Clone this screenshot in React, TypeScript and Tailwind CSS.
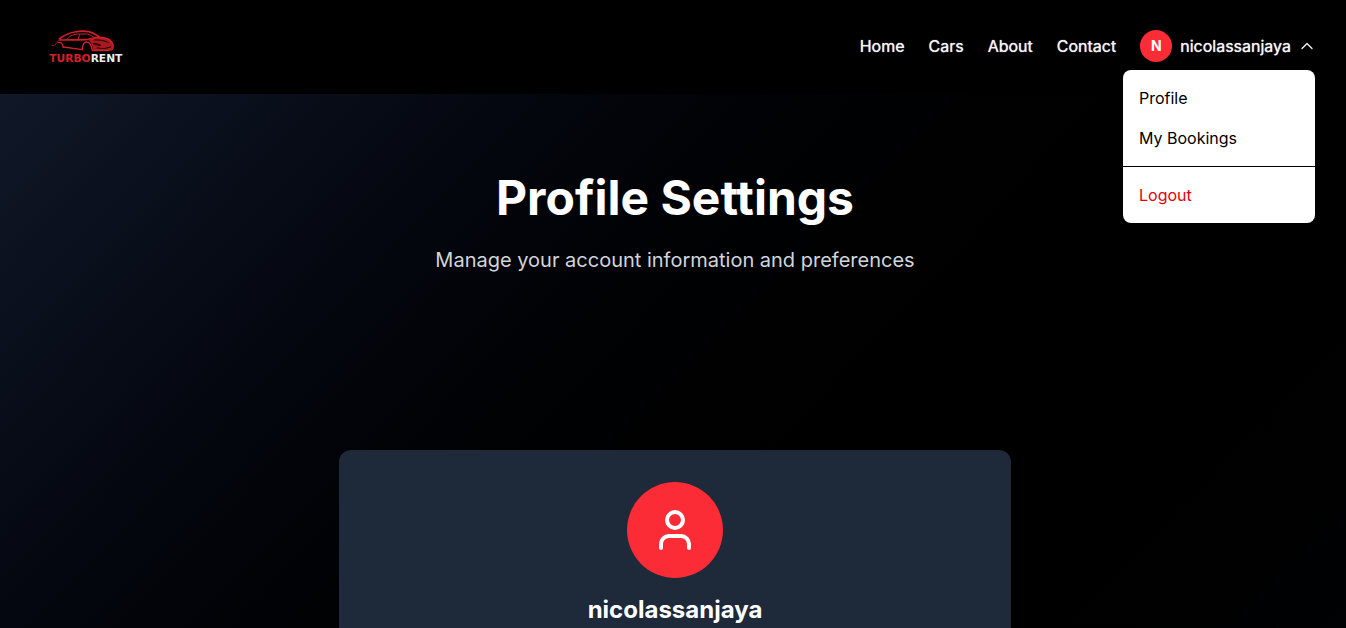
import { User } from "lucide-react";

const links = ["Home", "Cars", "About", "Contact"];

function Logo() {
  return (
    <a href="#home" aria-label="TurboRent home">
      <svg viewBox="0 6 285 144" className="h-12 w-[95px]" fill="none" strokeLinecap="round" strokeLinejoin="round">
        <path fill="#a8181f" d="M146 60C166 53 190 52 204 58C214 63 219 70 218 80C217 87 212 90 204 90L160 91C157 78 154 67 146 60Z" />
        <g stroke="#d41f26">
          <path strokeWidth="5" d="M58 57C72 46 84 39 104 36C126 32 148 33 162 41L178 51" />
          <path strokeWidth="3" d="M82 57C90 46 102 42 120 42L114 57M122 42L142 42C152 45 158 49 164 54" />
          <path strokeWidth="5" d="M60 60C90 59 120 60 146 58C166 51 190 51 204 57C214 62 219 70 219 80" />
          <path strokeWidth="2" d="M36 77C42 75 46 77 47 73C48 65 54 61 60 60" />
          <path strokeWidth="4" d="M70 81L127 89C127 73 133 65 141 66C151 67 155 79 157 92L204 91C214 91 219 88 219 80" />
          <path strokeWidth="4" d="M70 82C69 72 64 66 54 67" />
        </g>
        <g stroke="#1c0304">
          <path strokeWidth="3" d="M160 70C168 70 176 72 182 76L168 75Z" />
          <path strokeWidth="3" d="M172 84L192 86L212 81M164 60C178 59 192 61 204 67" />
        </g>
        <text x="28" y="126" fontSize="32" fontWeight="700" className="font-['DejaVu_Sans',sans-serif]">
          <tspan fill="#d41f26">TURBO</tspan>
          <tspan fill="#ededed">RENT</tspan>
        </text>
      </svg>
    </a>
  );
}

function AccountMenu() {
  return (
    <div className="relative">
      <button type="button" aria-haspopup="menu" aria-expanded="true" className="flex items-center gap-2">
        <span className="flex size-8 items-center justify-center rounded-full bg-[#fb2c36] text-sm font-bold text-white">N</span>
        <span className="[text-shadow:0_0_1px_currentColor]">nicolassanjaya</span>
        <svg viewBox="0 0 24 24" className="size-4" fill="none" stroke="currentColor" strokeWidth="2" strokeLinecap="round" strokeLinejoin="round" aria-hidden="true">
          <path d="m4.5 15.75 7.5-7.5 7.5 7.5" />
        </svg>
      </button>
      <div role="menu" className="absolute right-0 z-10 mt-2 w-48 rounded-lg bg-white py-2 text-black shadow-lg">
        <a role="menuitem" href="#profile" className="block px-4 py-2">Profile</a>
        <a role="menuitem" href="#bookings" className="block px-4 py-2">My Bookings</a>
        <hr className="my-2 border-black" />
        <button role="menuitem" type="button" className="block w-full px-4 py-2 text-left text-[#e7000b]">Logout</button>
      </div>
    </div>
  );
}

export default function App() {
  return (
    <div className="flex h-screen flex-col overflow-hidden bg-black font-['Inter',sans-serif] text-white">
      <header className="flex shrink-0 items-center justify-between bg-black pt-[22px] pr-[31px] pb-6 pl-10 text-gray-100">
        <Logo />
        <div className="flex items-center gap-6">
          <nav className="flex gap-6 [text-shadow:0_0_1px_currentColor]">
            {links.map((label) => (
              <a key={label} href={`#${label.toLowerCase()}`}>{label}</a>
            ))}
          </nav>
          <AccountMenu />
        </div>
      </header>
      <main className="min-h-[1400px] shrink-0 bg-gradient-to-br from-gray-900 via-black to-gray-900 pl-1">
        <section className="px-4 py-20 text-center">
          <h1 className="mb-6 text-5xl leading-none font-bold">Profile Settings</h1>
          <p className="text-xl text-gray-300">Manage your account information and preferences</p>
        </section>
        <section className="px-4 pt-24">
          <div className="mx-auto flex max-w-2xl flex-col items-center rounded-xl bg-gray-800 p-8">
            <div className="mb-4 flex size-24 items-center justify-center rounded-full bg-[#fb2c36]">
              <User className="size-12" aria-hidden="true" />
            </div>
            <h2 className="text-2xl font-bold">nicolassanjaya</h2>
          </div>
        </section>
      </main>
    </div>
  );
}
